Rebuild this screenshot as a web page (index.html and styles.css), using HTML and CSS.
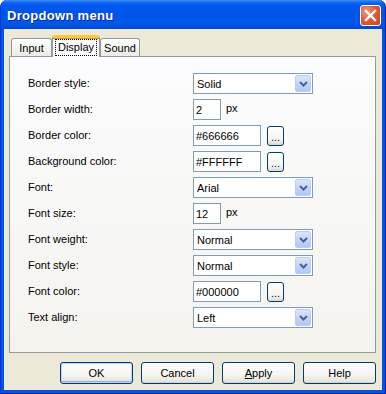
FILE: index.html
```html
<!DOCTYPE html>
<html lang="en">
<head>
<meta charset="UTF-8">
<title>Dropdown menu</title>
<link rel="stylesheet" href="styles.css">
</head>
<body>

<div class="window">
    <div class="titlebar">
        <span class="title">Dropdown menu</span>
        <div class="close">
            <svg width="13" height="13" viewBox="0 0 13 13"><path d="M2 2 L11 11 M11 2 L2 11" stroke="#fff" stroke-width="2.4" stroke-linecap="square"/></svg>
        </div>
    </div>

    <div class="client">
        <div class="tabs">
            <div class="tab tab-input">Input</div>
            <div class="tab tab-display active"><span class="focus">Display</span></div>
            <div class="tab tab-sound">Sound</div>
        </div>

        <div class="panel">
            <div class="form">
                <label>Border style:</label>
                <div class="combo"><span>Solid</span><span class="arrow"><svg width="9" height="6" viewBox="0 0 9 6"><path d="M1 1 L4.5 4.5 L8 1" fill="none" stroke="#4d6185" stroke-width="2"/></svg></span></div>

                <label>Border width:</label>
                <div class="field"><div class="textbox small">2</div><span class="unit">px</span></div>

                <label>Border color:</label>
                <div class="field"><div class="textbox color">#666666</div><div class="dots">...</div></div>

                <label>Background color:</label>
                <div class="field"><div class="textbox color">#FFFFFF</div><div class="dots">...</div></div>

                <label>Font:</label>
                <div class="combo"><span>Arial</span><span class="arrow"><svg width="9" height="6" viewBox="0 0 9 6"><path d="M1 1 L4.5 4.5 L8 1" fill="none" stroke="#4d6185" stroke-width="2"/></svg></span></div>

                <label>Font size:</label>
                <div class="field"><div class="textbox small">12</div><span class="unit">px</span></div>

                <label>Font weight:</label>
                <div class="combo"><span>Normal</span><span class="arrow"><svg width="9" height="6" viewBox="0 0 9 6"><path d="M1 1 L4.5 4.5 L8 1" fill="none" stroke="#4d6185" stroke-width="2"/></svg></span></div>

                <label>Font style:</label>
                <div class="combo"><span>Normal</span><span class="arrow"><svg width="9" height="6" viewBox="0 0 9 6"><path d="M1 1 L4.5 4.5 L8 1" fill="none" stroke="#4d6185" stroke-width="2"/></svg></span></div>

                <label>Font color:</label>
                <div class="field"><div class="textbox color">#000000</div><div class="dots">...</div></div>

                <label>Text align:</label>
                <div class="combo"><span>Left</span><span class="arrow"><svg width="9" height="6" viewBox="0 0 9 6"><path d="M1 1 L4.5 4.5 L8 1" fill="none" stroke="#4d6185" stroke-width="2"/></svg></span></div>
            </div>
        </div>

        <div class="buttons">
            <div class="btn default">OK</div>
            <div class="btn">Cancel</div>
            <div class="btn"><u>A</u>pply</div>
            <div class="btn">Help</div>
        </div>
    </div>
</div>

</body>
</html>
```

FILE: styles.css
```css
body {
    margin: 0;
    padding: 0;
    background-color: #ffffff;
    font-family: "Liberation Sans", Arial, sans-serif;
    font-size: 11px;
    color: #000000;
}

.window {
    width: 386px;
    height: 394px;
    display: flex;
    flex-direction: column;
    background-color: #0054e3;
    border-radius: 7px 7px 0 0;
    overflow: hidden;
    box-sizing: border-box;
    border-left: 1px solid #0831d9;
    border-right: 1px solid #001ea0;
    border-bottom: 1px solid #001ea0;
}

.titlebar {
    height: 29px;
    flex-shrink: 0;
    display: flex;
    align-items: center;
    padding: 0 4px 0 6px;
    background: linear-gradient(to bottom, #3d8ff7 0px, #0b61f0 3px, #0058ee 6px, #0055e6 14px, #0058ee 22px, #0049d6 29px);
}

.title {
    flex: 1;
    color: #ffffff;
    font-family: "Liberation Sans", Arial, sans-serif;
    font-weight: bold;
    font-size: 13px;
    letter-spacing: 0.3px;
    text-shadow: 1px 1px 0 #0a2a8c;
    padding-top: 1px;
}

.close {
    width: 19px;
    height: 19px;
    margin-top: 1px;
    border: 1px solid #ffffff;
    border-radius: 3px;
    background: radial-gradient(circle at 30% 30%, #f19a7f 0%, #e45a35 45%, #c8411e 100%);
    display: flex;
    align-items: center;
    justify-content: center;
}

.close svg {
    display: block;
}

.client {
    flex: 1;
    margin: 0 3px 3px 3px;
    background-color: #ece9d8;
    padding: 6px 6px 0 5px;
    display: flex;
    flex-direction: column;
}

.tabs {
    display: flex;
    align-items: flex-start;
    height: 22px;
    padding-left: 2px;
    position: relative;
    z-index: 1;
    margin-bottom: -1px;
}

.tab {
    height: 18px;
    margin-top: 3px;
    box-sizing: border-box;
    border: 1px solid #919b9c;
    border-bottom: none;
    border-radius: 3px 3px 0 0;
    background: linear-gradient(to bottom, #ffffff, #f3f3ef 60%, #ecebe6);
    display: flex;
    align-items: center;
    justify-content: center;
    padding-top: 1px;
}

.tab-input {
    width: 41px;
}

.tab-display {
    width: 48px;
}

.tab-sound {
    width: 40px;
}

.tab.active {
    height: 22px;
    margin-top: 0;
    background: #fcfcfe;
    border-top: 3px solid #ffc83c;
    box-shadow: inset 0 1px 0 #e68b2c;
    padding-top: 0;
    align-items: flex-start;
}

.focus {
    border: 1px dotted #000000;
    padding: 1px 2px 2px 2px;
    margin-top: 1px;
}

.panel {
    height: 297px;
    box-sizing: border-box;
    border: 1px solid #919b9c;
    background: linear-gradient(to bottom, #fcfcfe, #f4f3ee);
    padding: 16px 0 0 18px;
}

.form {
    display: grid;
    grid-template-columns: 165px auto;
    grid-auto-rows: 21px;
    row-gap: 5px;
    align-items: center;
}

.form label {
    color: #000000;
    margin-top: -2px;
}

.combo {
    width: 120px;
    height: 21px;
    box-sizing: border-box;
    border: 1px solid #7f9db9;
    background-color: #ffffff;
    display: flex;
    align-items: center;
    justify-content: space-between;
    padding: 0 1px 0 3px;
}

.arrow {
    width: 16px;
    height: 17px;
    box-sizing: border-box;
    border: 1px solid #b9cdf7;
    border-radius: 2px;
    background: linear-gradient(to bottom, #dbe6fd, #c2d4fb 50%, #b1c7f6);
    display: flex;
    align-items: center;
    justify-content: center;
}

.arrow svg {
    display: block;
}

.field {
    display: flex;
    align-items: center;
    height: 21px;
}

.textbox {
    height: 21px;
    box-sizing: border-box;
    border: 1px solid #7f9db9;
    background-color: #ffffff;
    display: flex;
    align-items: center;
    padding-left: 2px;
}

.textbox.small {
    width: 28px;
}

.textbox.color {
    width: 68px;
}

.unit {
    margin-left: 5px;
    margin-top: -3px;
}

.dots {
    width: 17px;
    height: 20px;
    margin-left: 6px;
    box-sizing: border-box;
    border: 1px solid #003c74;
    border-radius: 3px;
    background: linear-gradient(to bottom, #ffffff, #f4f3ee 70%, #dcdad0);
    color: #31006b;
    display: flex;
    align-items: flex-end;
    justify-content: center;
    padding-bottom: 4px;
    line-height: 8px;
}

.buttons {
    display: flex;
    justify-content: flex-end;
    gap: 8px;
    margin-top: 9px;
}

.btn {
    width: 73px;
    height: 22px;
    box-sizing: border-box;
    border: 1px solid #003c74;
    border-radius: 3px;
    background: linear-gradient(to bottom, #ffffff, #f5f4ef 60%, #e3e1d6);
    box-shadow: inset 0 -1px 0 #d6d0c5;
    display: flex;
    align-items: center;
    justify-content: center;
}

.btn.default {
    box-shadow: inset 0 0 0 1px #c2d5f8, inset 0 -2px 0 #8fb0e9;
}
```
